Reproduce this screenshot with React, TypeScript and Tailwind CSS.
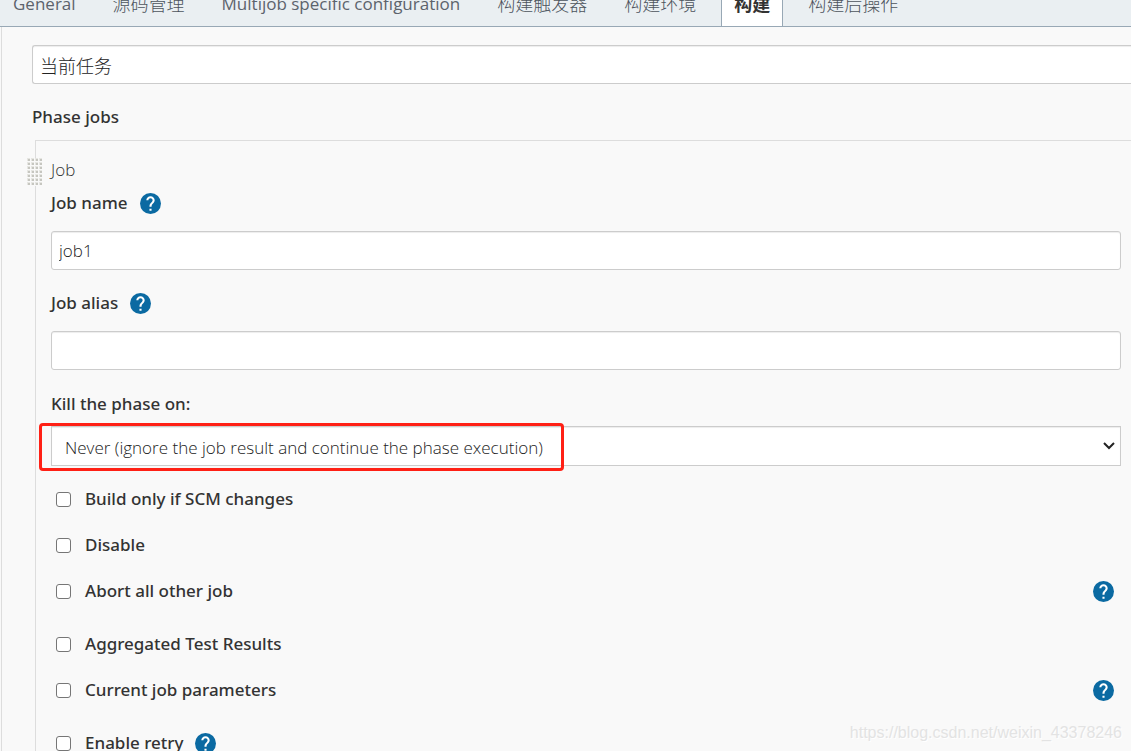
import { useId, useState } from "react";
import type { ReactNode } from "react";

const tabs = ["General", "源码管理", "Multijob specific configuration", "构建触发器", "构建环境", "构建", "构建后操作"];

function HelpButton({ topic }: { topic: string }) {
  return (
    <button type="button" aria-label={`Help for feature: ${topic}`} className="block size-[21px] shrink-0">
      <svg viewBox="2 2 20 20" className="size-full fill-[#0b6aa2]" aria-hidden="true">
        <circle cx="12" cy="12" r="10" />
        <path
          className="fill-white"
          d="M11 17h2v2h-2zM15.07 11.25l-.9.92C13.45 12.9 13 13.5 13 15h-2v-.5c0-1.1.45-2.1 1.17-2.83l1.24-1.26c.37-.36.59-.86.59-1.41 0-1.1-.9-2-2-2s-2 .9-2 2H8c0-2.21 1.79-4 4-4s4 1.79 4 4c0 .88-.36 1.68-.93 2.25z"
        />
      </svg>
    </button>
  );
}

function DragHandle() {
  return (
    <button type="button" aria-label="Drag job" className="absolute top-[17px] -left-[9px] h-7 w-[15px] bg-[#f9f9f9]">
      <svg viewBox="0 0 15 28" className="size-full" aria-hidden="true">
        {[0, 1, 2, 3, 4, 5, 6].map((row) =>
          [0, 1, 2, 3].map((col) => (
            <g key={`${row}-${col}`}>
              <rect x={col * 4} y={row * 4} width="3" height="3" fill="#e6e6e2" />
              <rect x={col * 4 + 1} y={row * 4 + 1} width="2" height="2" fill="#c6c6c0" />
            </g>
          )),
        )}
      </svg>
    </button>
  );
}

const labelClass = "font-['Noto_Sans',sans-serif] font-medium";

const inputClass =
  "block h-[39px] w-full rounded-[3px] border border-[#ccc] bg-white px-[7px] text-[17px] font-light text-[#222] shadow-[inset_0_1px_1px_rgba(0,0,0,0.075)] outline-none";

function TextField({ label, initial }: { label: string; initial: string }) {
  const id = useId();
  const [value, setValue] = useState(initial);
  return (
    <div className="mb-5">
      <div className="mb-[15px] flex h-[26px] items-center gap-3">
        <label htmlFor={id} className={labelClass}>{label}</label>
        <HelpButton topic={label} />
      </div>
      <input id={id} type="text" value={value} onChange={(e) => setValue(e.target.value)} className={inputClass} />
    </div>
  );
}

function CheckRow({ label, children, spaced }: { label: string; children?: ReactNode; spaced?: boolean }) {
  return (
    <div className={spaced ? "mb-[7px] flex h-[46px] items-center pr-[7px] pl-[5px]" : "flex h-[46px] items-center pr-[7px] pl-[5px]"}>
      <label className="flex items-center gap-[14px] font-['Noto_Sans',sans-serif] font-medium">
        <input type="checkbox" className="size-[15px] appearance-none rounded-[3px] border border-[#767676] bg-white checked:bg-[#0b6aa2]" />
        {label}
      </label>
      {children}
    </div>
  );
}

export default function App() {
  const [phase, setPhase] = useState("当前任务");
  return (
    <div className="flex h-screen flex-col overflow-hidden bg-[#f9f9f9] font-['Open_Sans','Noto_Sans_CJK_SC',sans-serif] text-[17px] leading-6 text-[#333]">
      <nav className="flex h-[27px] shrink-0 items-end gap-[13px] overflow-hidden border-b border-[#98a8b5] bg-[#eaeff2] pl-px text-[#4d545d]">
        {tabs.map((tab) => (
          <a
            key={tab}
            href="#"
            className={
              tab === "构建"
                ? "shrink-0 border-x border-[#98a8b5] bg-white px-3 pb-[10px] text-[18px] font-bold text-[#333]"
                : /^[A-Z]/.test(tab)
                  ? "shrink-0 px-3 pb-[10px] text-[#5c636c]"
                  : "shrink-0 px-3 pb-[10px] text-[18px] font-light"
            }
          >
            {tab}
          </a>
        ))}
      </nav>
      <main className="ml-px min-h-0 flex-1 border-l border-[#ddd] pt-[18px] pl-[30px]">
        <input
          aria-label="Phase name"
          type="text"
          value={phase}
          onChange={(e) => setPhase(e.target.value)}
          className="block h-[39px] w-full rounded-l-[3px] border border-r-0 border-[#ccc] bg-white px-[7px] text-[18px] font-light text-[#222] shadow-[inset_0_1px_1px_rgba(0,0,0,0.075)] outline-none"
        />
        <h2 className="mt-[21px] font-['Noto_Sans',sans-serif] font-medium">Phase jobs</h2>
        <section className="relative mt-[11px] ml-[3px] border-t border-l border-[#ddd] pt-[17px] pr-[10px] pb-6 pl-[15px]">
          <DragHandle />
          <h3 className="mb-2 font-light">Job</h3>
          <TextField label="Job name" initial="job1" />
          <TextField label="Job alias" initial="" />
          <label htmlFor="kill-phase" className="mb-[10px] block h-[26px] pt-[2px] font-['Noto_Sans',sans-serif] font-medium">Kill the phase on:</label>
          <div className="relative mb-[10px]">
            <select
              id="kill-phase"
              className="block h-10 w-full appearance-none border border-[#ccc] bg-white pt-1 pr-8 pl-[13px] text-[17px] font-light text-[#222] shadow-[inset_0_1px_1px_rgba(0,0,0,0.075)] outline-none"
            >
              <option>Never (ignore the job result and continue the phase execution)</option>
            </select>
            <svg viewBox="0 0 12 8" className="pointer-events-none absolute top-4 right-[6px] h-2 w-3 fill-none stroke-[#222] stroke-2" aria-hidden="true">
              <path d="M1 1l5 5 5-5" />
            </svg>
            <div className="pointer-events-none absolute -top-[3px] -left-3 h-12 w-[525px] rounded-[4px] border-3 border-[#ff2015]" />
          </div>
          <CheckRow label="Build only if SCM changes" />
          <CheckRow label="Disable" />
          <CheckRow label="Abort all other job" spaced>
            <span className="ml-auto"><HelpButton topic="Abort all other job" /></span>
          </CheckRow>
          <CheckRow label="Aggregated Test Results" />
          <CheckRow label="Current job parameters" spaced>
            <span className="ml-auto"><HelpButton topic="Current job parameters" /></span>
          </CheckRow>
          <CheckRow label="Enable retry">
            <span className="ml-3"><HelpButton topic="Enable retry" /></span>
          </CheckRow>
        </section>
      </main>
      <p className="pointer-events-none absolute right-[9px] bottom-[6px] font-['Liberation_Sans',sans-serif] text-base text-[#e3e3e3] [text-shadow:1px_1px_0_#fff]">
        https://blog.csdn.net/weixin_43378246
      </p>
    </div>
  );
}
